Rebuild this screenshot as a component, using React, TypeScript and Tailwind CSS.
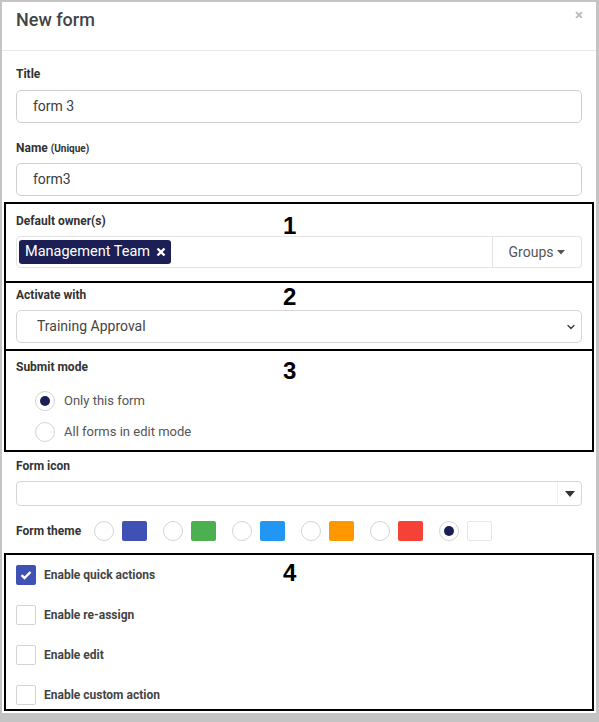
import { ChevronDown } from "lucide-react";

const themes = ["#3F51B5", "#4CAF50", "#2196F3", "#FF9800", "#F44336", "#ffffff"];

function Label({ children }: { children: React.ReactNode }) {
  return <div className="text-[12px] leading-[16px] font-bold text-[#333]">{children}</div>;
}

function Marker({ n, top }: { n: string; top: string }) {
  return (
    <span className={`absolute left-[277px] ${top} text-[24px] leading-[24px] font-bold text-black font-['Liberation_Sans',sans-serif]`}>
      {n}
    </span>
  );
}

function Radio({ checked }: { checked?: boolean }) {
  return (
    <span className="w-[20px] h-[20px] rounded-full border border-[#d4d4d4] bg-white flex items-center justify-center shrink-0">
      {checked && <span className="w-[10px] h-[10px] rounded-full bg-[#1b1f55]" />}
    </span>
  );
}

function Check({ checked, label }: { checked?: boolean; label: string }) {
  return (
    <div className="flex items-center gap-[8px] h-[20px]">
      {checked ? (
        <span className="w-[20px] h-[20px] rounded-[2px] bg-[#3F51B5] flex items-center justify-center">
          <svg width="12" height="10" viewBox="0 0 12 10">
            <path d="M1.5 5.2 L4.5 8 L10.5 2" stroke="white" strokeWidth="2.4" fill="none" />
          </svg>
        </span>
      ) : (
        <span className="w-[20px] h-[20px] rounded-[2px] border border-[#d4d4d4] bg-white" />
      )}
      <span className="text-[12px] font-bold text-[#444]">{label}</span>
    </div>
  );
}

export default function App() {
  return (
    <div className="w-[599px] h-[722px] bg-[#c4c4c4] pt-[2px] pl-[2px] pr-[3px] pb-[9px] font-['Roboto',sans-serif]">
      <div className="h-[711px] bg-white overflow-hidden">
        <div className="h-[49px] border-b border-[#e8e8e8] flex items-start justify-between pl-[14px] pr-[13px] pt-[6px]">
          <h1 className="text-[18px] leading-[24px] font-medium text-[#444]">New form</h1>
          <span className="text-[#bbb] text-[15px] leading-[15px] font-bold">×</span>
        </div>
        <div className="px-[2px]">
          <div className="px-[12px] pt-[15px] pb-[6px]">
            <Label>Title</Label>
            <div className="mt-[8px] h-[33px] rounded-[5px] border border-[#cfcfcf] flex items-center px-[16px] text-[14px] text-[#3d3d3d]">
              form 3
            </div>
            <div className="mt-[17px]">
              <Label>
                Name <span className="text-[10px]">(Unique)</span>
              </Label>
            </div>
            <div className="mt-[6px] h-[33px] rounded-[5px] border border-[#cfcfcf] flex items-center px-[16px] text-[14px] text-[#3d3d3d]">
              form3
            </div>
          </div>

          <div className="relative border-2 border-black px-[10px] pt-[9px] pb-[13px]">
            <Marker n="1" top="top-[10px]" />
            <Label>Default owner(s)</Label>
            <div className="mt-[7px] h-[32px] flex">
              <div className="flex-1 border border-[#e3e3e3] rounded-l-[4px] flex items-center px-[2px]">
                <span className="h-[24px] rounded-[3px] bg-[#1b1f55] text-white text-[14.5px] flex items-center gap-[6px] pl-[6px] pr-[5px]">
                  Management Team
                  <svg width="10" height="10" viewBox="0 0 10 10">
                    <path d="M1.5 1.5 L8.5 8.5 M8.5 1.5 L1.5 8.5" stroke="white" strokeWidth="2.4" />
                  </svg>
                </span>
              </div>
              <div className="w-[89px] border border-l-0 border-[#e3e3e3] rounded-r-[4px] flex items-center justify-center gap-[4px] text-[14px] text-[#555]">
                Groups
                <svg width="8" height="5" viewBox="0 0 8 5">
                  <path d="M0 0 L8 0 L4 4.5 Z" fill="#555" />
                </svg>
              </div>
            </div>
          </div>

          <div className="relative border-2 border-t-0 border-black px-[10px] pt-[4px] pb-[6px]">
            <Marker n="2" top="top-[2px]" />
            <Label>Activate with</Label>
            <div className="mt-[7px] h-[33px] rounded-[5px] border border-[#d6d6d6] flex items-center justify-between pl-[20px] pr-[4px] text-[14px] text-[#444]">
              Training Approval
              <ChevronDown size={12} strokeWidth={2.5} className="text-[#333]" />
            </div>
          </div>

          <div className="relative border-2 border-t-0 border-black px-[10px] pt-[8px] pb-[8px]">
            <Marker n="3" top="top-[8px]" />
            <Label>Submit mode</Label>
            <div className="mt-[16px] pl-[19px] flex flex-col gap-[11px]">
              <div className="flex items-center gap-[9px] h-[20px]">
                <Radio checked />
                <span className="text-[13px] text-[#555]">Only this form</span>
              </div>
              <div className="flex items-center gap-[9px] h-[20px]">
                <Radio />
                <span className="text-[13px] text-[#555]">All forms in edit mode</span>
              </div>
            </div>
          </div>

          <div className="px-[12px] pt-[6px] pb-[12px]">
            <Label>Form icon</Label>
            <div className="mt-[7px] h-[25px] rounded-[4px] border border-[#d6d6d6] flex justify-end">
              <div className="w-[24px] border-l border-[#efefef] flex items-center justify-center">
                <svg width="10" height="6" viewBox="0 0 10 6">
                  <path d="M0 0 L10 0 L5 6 Z" fill="#333" />
                </svg>
              </div>
            </div>
            <div className="mt-[15px] h-[20px] flex items-center">
              <span className="w-[78px] text-[12px] font-bold text-[#333]">Form theme</span>
              <div className="flex items-center gap-[16px]">
                {themes.map((c, i) => (
                  <div key={c} className="flex items-center gap-[8px]">
                    <Radio checked={i === 5} />
                    <span
                      className={`w-[25px] h-[20px] rounded-[2px] ${i === 5 ? "border border-[#e6e6e6]" : ""}`}
                      style={{ backgroundColor: c }}
                    />
                  </div>
                ))}
              </div>
            </div>
          </div>

          <div className="relative border-2 border-black px-[10px] pt-[10px] pb-[4px] flex flex-col gap-[20px]">
            <Marker n="4" top="top-[6px]" />
            <Check checked label="Enable quick actions" />
            <Check label="Enable re-assign" />
            <Check label="Enable edit" />
            <Check label="Enable custom action" />
          </div>
        </div>
      </div>
    </div>
  );
}
